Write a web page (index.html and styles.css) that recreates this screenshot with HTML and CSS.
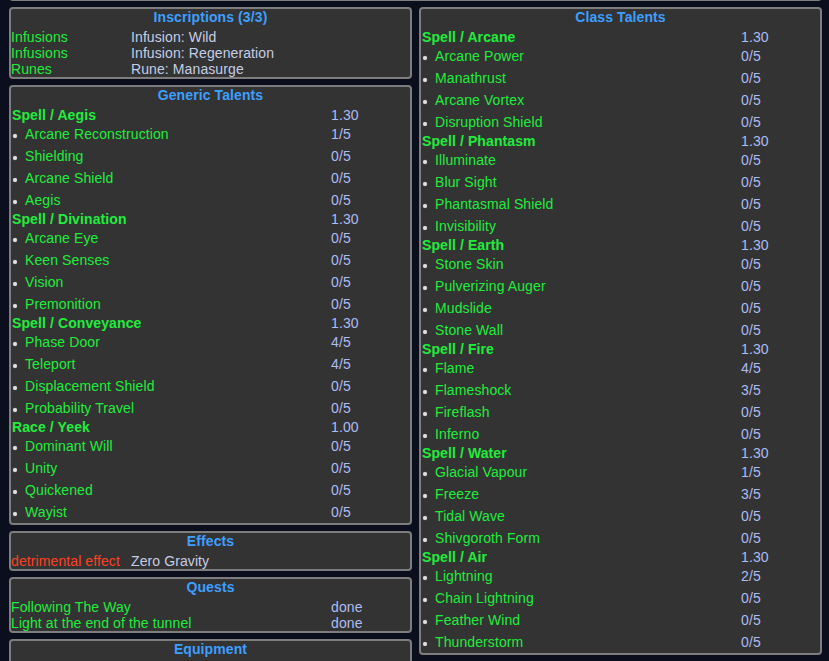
FILE: index.html
```html
<!DOCTYPE html>
<html lang="en">
<head>
    <meta charset="UTF-8">
    <title>Character Sheet</title>
    <link rel="stylesheet" href="styles.css">
</head>
<body>
<div class="sheet">
    <div class="box box-wide"></div>

    <div class="column">
        <div class="box">
            <div class="title">Inscriptions (3/3)</div>
            <div class="grid narrow">
                <span class="green">Infusions</span><span class="name">Infusion: Wild</span>
                <span class="green">Infusions</span><span class="name">Infusion: Regeneration</span>
                <span class="green">Runes</span><span class="name">Rune: Manasurge</span>
            </div>
        </div>

        <div class="box">
            <div class="title">Generic Talents</div>
            <div class="talents" id="generic"></div>
        </div>

        <div class="box">
            <div class="title">Effects</div>
            <div class="grid narrow">
                <span class="red">detrimental effect</span><span class="name">Zero Gravity</span>
            </div>
        </div>

        <div class="box">
            <div class="title">Quests</div>
            <div class="grid wide">
                <span class="green">Following The Way</span><span class="value">done</span>
                <span class="green">Light at the end of the tunnel</span><span class="value">done</span>
            </div>
        </div>

        <div class="box">
            <div class="title">Equipment</div>
            <div class="grid wide">
                <span class="green">&nbsp;</span><span class="value">&nbsp;</span>
            </div>
        </div>
    </div>

    <div class="column">
        <div class="box">
            <div class="title">Class Talents</div>
            <div class="talents" id="class"></div>
        </div>
    </div>
</div>

<script>
    const generic = [
        ["Spell / Aegis", "1.30", [["Arcane Reconstruction", "1/5"], ["Shielding", "0/5"], ["Arcane Shield", "0/5"], ["Aegis", "0/5"]]],
        ["Spell / Divination", "1.30", [["Arcane Eye", "0/5"], ["Keen Senses", "0/5"], ["Vision", "0/5"], ["Premonition", "0/5"]]],
        ["Spell / Conveyance", "1.30", [["Phase Door", "4/5"], ["Teleport", "4/5"], ["Displacement Shield", "0/5"], ["Probability Travel", "0/5"]]],
        ["Race / Yeek", "1.00", [["Dominant Will", "0/5"], ["Unity", "0/5"], ["Quickened", "0/5"], ["Wayist", "0/5"]]]
    ];

    const classTalents = [
        ["Spell / Arcane", "1.30", [["Arcane Power", "0/5"], ["Manathrust", "0/5"], ["Arcane Vortex", "0/5"], ["Disruption Shield", "0/5"]]],
        ["Spell / Phantasm", "1.30", [["Illuminate", "0/5"], ["Blur Sight", "0/5"], ["Phantasmal Shield", "0/5"], ["Invisibility", "0/5"]]],
        ["Spell / Earth", "1.30", [["Stone Skin", "0/5"], ["Pulverizing Auger", "0/5"], ["Mudslide", "0/5"], ["Stone Wall", "0/5"]]],
        ["Spell / Fire", "1.30", [["Flame", "4/5"], ["Flameshock", "3/5"], ["Fireflash", "0/5"], ["Inferno", "0/5"]]],
        ["Spell / Water", "1.30", [["Glacial Vapour", "1/5"], ["Freeze", "3/5"], ["Tidal Wave", "0/5"], ["Shivgoroth Form", "0/5"]]],
        ["Spell / Air", "1.30", [["Lightning", "2/5"], ["Chain Lightning", "0/5"], ["Feather Wind", "0/5"], ["Thunderstorm", "0/5"]]]
    ];

    function fillTalents(id, list) {
        const el = document.getElementById(id);
        let html = "";
        list.forEach(function (cat) {
            html += '<div class="cat"><span class="green bold">' + cat[0] + '</span><span class="value">' + cat[1] + '</span></div>';
            cat[2].forEach(function (t) {
                html += '<div class="talent"><span class="label"><i class="dot"></i><span class="green">' + t[0] + '</span></span><span class="value">' + t[1] + '</span></div>';
            });
        });
        el.innerHTML = html;
    }

    fillTalents("generic", generic);
    fillTalents("class", classTalents);
</script>
</body>
</html>
```

FILE: styles.css
```css
body {
    margin: 0;
    background-color: #0b0f1d;
    font-family: "Liberation Sans", Arial, sans-serif;
    font-size: 14px;
    line-height: 16px;
    letter-spacing: 0.1px;
    overflow: hidden;
}

.sheet {
    display: grid;
    grid-template-columns: 1fr 1fr;
    column-gap: 7px;
    row-gap: 6px;
    padding: 0 7px 0 9px;
}

.column {
    display: flex;
    flex-direction: column;
    gap: 6px;
    min-width: 0;
}

.box {
    background-color: #333333;
    border: 2px solid #7d7d7d;
    border-radius: 4px;
}

/* bottom edge of the panel above, scrolled mostly out of view */
.box-wide {
    grid-column: 1 / -1;
    height: 30px;
    margin-top: -33px;
}

.title {
    text-align: center;
    font-weight: bold;
    color: #3d9fff;
    padding-bottom: 4px;
}

.grid {
    display: grid;
    white-space: nowrap;
}

.grid.narrow {
    grid-template-columns: 120px 1fr;
}

.grid.wide {
    grid-template-columns: 320px 1fr;
}

.green {
    color: #20ec3c;
}

.bold {
    font-weight: bold;
}

.red {
    color: #ff4122;
}

.name {
    color: #c6cde6;
}

.value {
    color: #adbcf4;
}

.talents .cat,
.talents .talent {
    display: grid;
    grid-template-columns: 320px 1fr;
    white-space: nowrap;
}

.talents .cat span:first-child {
    padding-left: 1px;
}

.talents .talent {
    height: 22px;
    align-items: center;
}

.talents .label {
    display: flex;
    align-items: center;
}

.dot {
    display: inline-block;
    width: 4px;
    height: 4px;
    margin: 4px 8px 0 2px;
    border-radius: 2px;
    background-color: #e0e0e0;
    box-shadow: 0 0 1px #a0a0a0;
}
```
